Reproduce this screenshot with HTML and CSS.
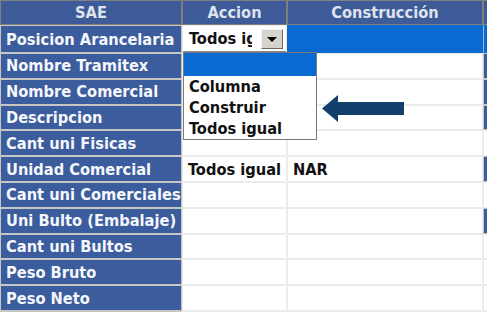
FILE: index.html
```html
<!DOCTYPE html>
<html lang="es">
<head>
    <meta charset="UTF-8">
    <title>Mapeo SAE</title>
    <link rel="stylesheet" href="styles.css">
</head>
<body>

<table class="grid">
    <tr>
        <th class="c1">SAE</th>
        <th class="c2">Accion</th>
        <th class="c3">Construcción</th>
        <th class="c4"></th>
    </tr>
    <tr>
        <td class="name">Posicion Arancelaria</td>
        <td class="action">
            <div class="combo">
                <span class="combo_text">Todos igual</span>
                <span class="combo_btn"></span>
                <div class="combo_list">
                    <div class="opt opt_sel"></div>
                    <div class="opt">Columna</div>
                    <div class="opt">Construir</div>
                    <div class="opt">Todos igual</div>
                </div>
            </div>
        </td>
        <td class="cell selected"></td>
        <td class="edge selected"></td>
    </tr>
    <tr>
        <td class="name">Nombre Tramitex</td>
        <td class="cell"></td>
        <td class="cell"></td>
        <td class="edge blue"></td>
    </tr>
    <tr>
        <td class="name">Nombre Comercial</td>
        <td class="cell"></td>
        <td class="cell"></td>
        <td class="edge blue"></td>
    </tr>
    <tr>
        <td class="name">Descripcion</td>
        <td class="cell"></td>
        <td class="cell"></td>
        <td class="edge blue"></td>
    </tr>
    <tr>
        <td class="name">Cant uni Fisicas</td>
        <td class="cell"></td>
        <td class="cell"></td>
        <td class="edge"></td>
    </tr>
    <tr>
        <td class="name">Unidad Comercial</td>
        <td class="cell">Todos igual</td>
        <td class="cell">NAR</td>
        <td class="edge blue"></td>
    </tr>
    <tr>
        <td class="name">Cant uni Comerciales</td>
        <td class="cell"></td>
        <td class="cell"></td>
        <td class="edge"></td>
    </tr>
    <tr>
        <td class="name">Uni Bulto (Embalaje)</td>
        <td class="cell"></td>
        <td class="cell"></td>
        <td class="edge blue"></td>
    </tr>
    <tr>
        <td class="name">Cant uni Bultos</td>
        <td class="cell"></td>
        <td class="cell"></td>
        <td class="edge"></td>
    </tr>
    <tr>
        <td class="name">Peso Bruto</td>
        <td class="cell"></td>
        <td class="cell"></td>
        <td class="edge"></td>
    </tr>
    <tr>
        <td class="name">Peso Neto</td>
        <td class="cell"></td>
        <td class="cell"></td>
        <td class="edge"></td>
    </tr>
    <tr>
        <td class="name"></td>
        <td class="cell"></td>
        <td class="cell"></td>
        <td class="edge"></td>
    </tr>
</table>

<!-- flecha que apunta al desplegable -->
<svg class="pointer" width="83" height="28" viewBox="0 0 83 28">
    <path d="M0 13.5 L16 0 L16 7 L82 7 L82 20 L16 20 L16 27 Z" fill="#123f6c"/>
</svg>

</body>
</html>
```

FILE: styles.css
```css
html, body {
    margin: 0;
    padding: 0;
    overflow: hidden;
    background: #fff;
}
body {
    font-family: "DejaVu Sans Condensed", "DejaVu Sans", Verdana, sans-serif;
    font-size: 16.3px;
    font-weight: bold;
    position: relative;
    width: 487px;
    height: 312px;
}
.grid {
    border-collapse: separate;
    border-spacing: 0;
    table-layout: fixed;
    width: 583px;
}
.grid th, .grid td {
    box-sizing: border-box;
    padding: 0;
    white-space: nowrap;
    overflow: hidden;
}
.grid th {
    height: 25px;
    background-color: #3d5b98;
    color: #dfe3ec;
    border: 1px solid #7f7f7f;
    text-align: center;
}
.c1 { width: 182px; }
.c2 { width: 105px; }
.c3 { width: 196px; }
.c4 { width: 100px; }

.grid td {
    height: 25.8px;
}
.name {
    background-color: #3b5c9d;
    color: #f5f7fb;
    border: 1px solid #c6c6c6;
    padding-left: 5px !important;
    text-overflow: clip;
}
.cell {
    border: 1px solid #ececec;
    color: #111;
    padding-left: 5px !important;
}
.edge {
    border: 1px solid #ececec;
}
.edge.blue {
    background-color: #3b5c9d;
    border-color: #c6c6c6;
}
.selected {
    background-color: #0b69d2;
    border-color: #0b69d2;
}
.edge.selected {
    border-left-color: #9bb7e0;
}

/* combo de la columna Accion */
.action {
    position: relative;
    overflow: visible !important;
    border: 1px solid #ececec;
}
.combo {
    display: flex;
    align-items: center;
    height: 25px;
    background: #fff;
    border-bottom: 1px solid #8a8a8a;
    position: relative;
}
.combo_text {
    width: 63px;
    flex-shrink: 0;
    overflow: hidden;
    padding-left: 6px;
    color: #111;
}
.combo_btn {
    width: 22px;
    height: 20px;
    box-sizing: border-box;
    margin-left: 9px;
    background: #d6d3cc;
    border: 1px solid;
    border-color: #f4f4f4 #6a6a6a #6a6a6a #f4f4f4;
    position: relative;
}
.combo_btn:after {
    content: '';
    position: absolute;
    left: 5px;
    top: 7px;
    border-left: 5px solid transparent;
    border-right: 5px solid transparent;
    border-top: 5px solid #000;
}
.combo_list {
    position: absolute;
    left: 0;
    top: 26px;
    width: 134px;
    box-sizing: border-box;
    background: #fff;
    border: 1px solid #7a7a7a;
    z-index: 2;
}
.opt {
    height: 21px;
    line-height: 21px;
    padding-left: 5px;
    color: #111;
}
.opt_sel {
    height: 23px;
    background-color: #0b69d2;
}

.pointer {
    position: absolute;
    left: 322px;
    top: 95px;
}
```
